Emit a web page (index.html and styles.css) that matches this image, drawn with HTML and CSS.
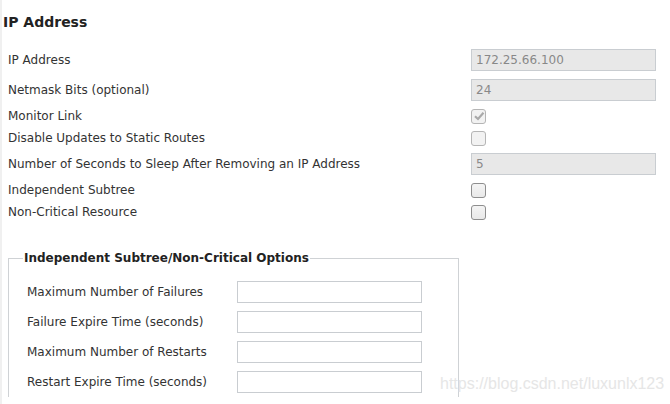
FILE: index.html
```html
<!DOCTYPE html>
<html>
<head>
<meta charset="utf-8">
<link rel="stylesheet" href="styles.css">
</head>
<body>
<div class="page">
  <h2 class="title">IP Address</h2>
  <div class="rows">
    <div class="row tall"><span class="label">IP Address</span><span class="field disabled">172.25.66.100</span></div>
    <div class="row tall"><span class="label">Netmask Bits (optional)</span><span class="field disabled">24</span></div>
    <div class="row"><span class="label">Monitor Link</span><span class="check checked disabled"><svg viewBox="0 0 14 14" width="14" height="14"><path d="M3 7.2 L6 10 L11.5 3.8" fill="none" stroke="#a9a9a9" stroke-width="2.2"/></svg></span></div>
    <div class="row"><span class="label">Disable Updates to Static Routes</span><span class="check disabled"></span></div>
    <div class="row tall"><span class="label">Number of Seconds to Sleep After Removing an IP Address</span><span class="field disabled">5</span></div>
    <div class="row"><span class="label">Independent Subtree</span><span class="check"></span></div>
    <div class="row"><span class="label">Non-Critical Resource</span><span class="check"></span></div>
  </div>
  <fieldset class="options">
    <legend>Independent Subtree/Non-Critical Options</legend>
    <div class="orow"><span class="olabel">Maximum Number of Failures</span><span class="field"></span></div>
    <div class="orow"><span class="olabel">Failure Expire Time (seconds)</span><span class="field"></span></div>
    <div class="orow"><span class="olabel">Maximum Number of Restarts</span><span class="field"></span></div>
    <div class="orow"><span class="olabel">Restart Expire Time (seconds)</span><span class="field"></span></div>
  </fieldset>
</div>
<div class="watermark">https://blog.csdn.net/luxunlx123</div>
</body>
</html>
```
FILE: styles.css
```css
html, body {
  margin: 0;
  padding: 0;
  background: #fff;
}
body {
  font-family: "DejaVu Sans", sans-serif;
  font-size: 12px;
  color: #333;
  width: 670px;
  height: 404px;
  overflow: hidden;
  position: relative;
  border-left: 2px solid #f0f0f0;
  box-sizing: border-box;
}
.page {
  padding-top: 13px;
}
.title {
  margin: 0 0 0 1px;
  font-size: 14px;
  font-weight: bold;
  color: #222;
  line-height: 18px;
}
.rows {
  margin-top: 14px;
  padding-left: 6px;
}
.row {
  display: flex;
  align-items: center;
  height: 22px;
}
.row.tall {
  height: 30px;
}
.label {
  width: 463px;
}
.field {
  display: block;
  box-sizing: border-box;
  width: 185px;
  height: 22px;
  border: 1px solid #c9cdd1;
  background: #fff;
  padding: 0 4px;
  line-height: 20px;
  color: #888;
}
.field.disabled {
  background: #e8e8e8;
}
.check {
  display: block;
  box-sizing: border-box;
  width: 15px;
  height: 15px;
  border: 1px solid #8e8e8e;
  border-radius: 3px;
  background: linear-gradient(#f4f4f4, #e9e9e9);
  position: relative;
}
.check.disabled {
  border-color: #b5b5b5;
  background: #f2f2f2;
}
.check svg {
  position: absolute;
  left: -0.5px;
  top: -0.5px;
}
.options {
  margin: 28px 0 0 6px;
  width: 451px;
  box-sizing: border-box;
  border: 1px solid #cfd2d5;
  border-bottom: none;
  padding: 12px 0 0 14px;
}
.options legend {
  padding: 0 1px;
  font-weight: bold;
  color: #222;
  font-size: 12px;
}
.orow {
  display: flex;
  align-items: center;
  height: 30px;
  padding-left: 4px;
}
.olabel {
  width: 210px;
}
.watermark {
  position: absolute;
  left: 438px;
  top: 375px;
  font-family: "Liberation Sans", Arial, sans-serif;
  font-size: 16px;
  color: #e6e6e6;
}
```
